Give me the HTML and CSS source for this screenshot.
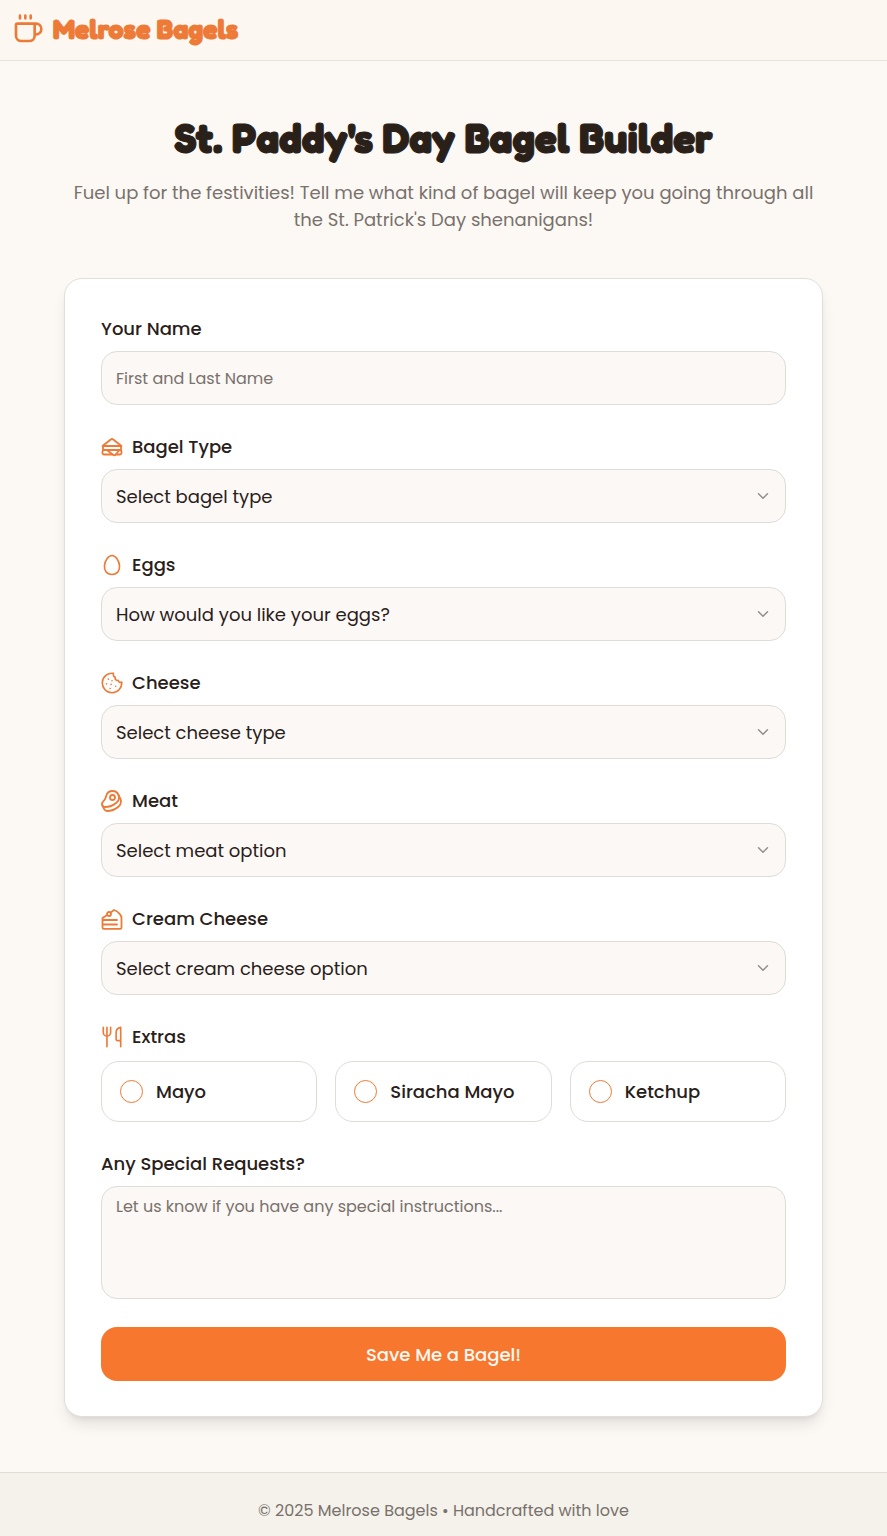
FILE: index.html
```
<!DOCTYPE html>
<html lang="en">
<head>
  <meta charset="UTF-8">
  <meta name="viewport" content="width=device-width, initial-scale=1.0">
  <title>St. Paddy's Day Bagel Builder - Melrose Bagels</title>
  <link rel="stylesheet" href="styles.css">
</head>
<body>

  <header>
    <a class="logo" href="#">
      <svg class="logo-icon" viewBox="0 0 24 24"><path d="M6 2v2M10 2v2M14 2v2M16 8a1 1 0 0 1 1 1v8a4 4 0 0 1-4 4H7a4 4 0 0 1-4-4V9a1 1 0 0 1 1-1h14a4 4 0 1 1 0 8h-1"/></svg>
      <span>Melrose Bagels</span>
    </a>
  </header>

  <main>
    <div class="intro">
      <h1>St. Paddy's Day Bagel Builder</h1>
      <p>Fuel up for the festivities! Tell me what kind of bagel will keep you going through all the St. Patrick's Day shenanigans!</p>
    </div>

    <form class="card">
      <div class="field">
        <label for="name">Your Name</label>
        <input type="text" id="name" placeholder="First and Last Name">
      </div>

      <div class="field">
        <label for="bagel">
          <svg class="icon" viewBox="1 1 22 22"><path d="M3 11v3a1 1 0 0 0 1 1h16a1 1 0 0 0 1-1v-3"/><path d="M12 19.500H4A1.500 1.500 0 0 1 2.500 18v-1.500A1.500 1.500 0 0 1 4 15h16a1.500 1.500 0 0 1 1.500 1.500V18a1.500 1.500 0 0 1-1.500 1.500h-4"/><path d="m2.500 11 8.270-6.540a2 2 0 0 1 2.460 0L21.500 11h-19Z"/><path d="M12.970 19.770 7 15h12.500l-3.750 4.500a2 2 0 0 1-2.780.27Z"/></svg>
          Bagel Type
        </label>
        <div class="select-wrap">
          <select id="bagel"><option>Select bagel type</option></select>
          <svg class="chevron" viewBox="0 0 24 24"><path d="m6 9 6 6 6-6"/></svg>
        </div>
      </div>

      <div class="field">
        <label for="eggs">
          <svg class="icon" viewBox="0 0 24 24"><path d="M12 22.400c6.200 0 8.600-4.700 8.200-9.700C19.800 7.300 16 1.600 12 1.600S4.200 7.300 3.800 12.700C3.400 17.700 5.800 22.400 12 22.400z"/></svg>
          Eggs
        </label>
        <div class="select-wrap">
          <select id="eggs"><option>How would you like your eggs?</option></select>
          <svg class="chevron" viewBox="0 0 24 24"><path d="m6 9 6 6 6-6"/></svg>
        </div>
      </div>

      <div class="field">
        <label for="cheese">
          <svg class="icon" viewBox="0 0 24 24"><path d="M13.500 1.500A10.600 10.600 0 1 0 22.600 11c-1.700.8-3.400 0-3.900-1.800-2.200.3-3.800-1.300-3.200-3.500-1.700-.7-2.400-2.400-2-4.200Z"/><path d="M8 7.800v.01M12 9.500v.01M6 13v.01M11 13.500v.01M10 18v.01M16 15.500v.01"/></svg>
          Cheese
        </label>
        <div class="select-wrap">
          <select id="cheese"><option>Select cheese type</option></select>
          <svg class="chevron" viewBox="0 0 24 24"><path d="m6 9 6 6 6-6"/></svg>
        </div>
      </div>

      <div class="field">
        <label for="meat">
          <svg class="icon" viewBox="1 1 22 22"><circle cx="12.5" cy="8.5" r="2.5"/><path d="M12.5 2a6.5 6.5 0 0 0-6.22 4.6c-1.1 3.13-.78 3.9-3.18 6.08A3 3 0 0 0 5 18c4 0 8.4-1.8 11.4-4.3A6.5 6.5 0 0 0 12.5 2Z"/><path d="m18.5 6 2.19 4.5a6.48 6.48 0 0 1 .31 2 6.49 6.49 0 0 1-2.6 5.2C15.4 20.2 11 22 7 22a3 3 0 0 1-2.68-1.66L2.4 16.5"/></svg>
          Meat
        </label>
        <div class="select-wrap">
          <select id="meat"><option>Select meat option</option></select>
          <svg class="chevron" viewBox="0 0 24 24"><path d="m6 9 6 6 6-6"/></svg>
        </div>
      </div>

      <div class="field">
        <label for="cream-cheese">
          <svg class="icon" viewBox="1 1 22 22"><circle cx="9" cy="7" r="2"/><path d="M7.2 7.9 2.5 11v9.500c0 .8.5 1.300 1.300 1.300h16.400c.8 0 1.300-.5 1.300-1.300V11c0-2.500-3-6.500-7.500-8l-3.400 2.600"/><path d="M17 13H3M17 17.500H3"/></svg>
          Cream Cheese
        </label>
        <div class="select-wrap">
          <select id="cream-cheese"><option>Select cream cheese option</option></select>
          <svg class="chevron" viewBox="0 0 24 24"><path d="m6 9 6 6 6-6"/></svg>
        </div>
      </div>

      <fieldset class="extras">
        <legend>
          <svg class="icon" viewBox="0 0 24 24"><path d="M2.500 1.500V7a4 4 0 0 0 8 0V1.500M6.500 1.500v21M21.500 16h-3.500a1.500 1.500 0 0 1-1.500-1.500V7c0-3 2-5 5-5.500v21"/></svg>
          Extras
        </legend>
        <div class="options">
          <label class="option"><input type="checkbox" name="extras" value="mayo">Mayo</label>
          <label class="option"><input type="checkbox" name="extras" value="siracha-mayo">Siracha Mayo</label>
          <label class="option"><input type="checkbox" name="extras" value="ketchup">Ketchup</label>
        </div>
      </fieldset>

      <div class="field">
        <label for="requests">Any Special Requests?</label>
        <textarea id="requests" placeholder="Let us know if you have any special instructions..."></textarea>
      </div>

      <button type="submit">Save Me a Bagel!</button>
    </form>
  </main>

  <footer>
    <p>© 2025 Melrose Bagels • Handcrafted with love</p>
  </footer>

</body>
</html>
```
FILE: styles.css
```
* {
  box-sizing: border-box;
}
body {
  margin: 0;
  min-height: 100vh;
  display: flex;
  flex-direction: column;
  font-family: Poppins, Inter, sans-serif;
  font-size: 18px;
  line-height: 27px;
  color: #292019;
  background-color: #fcf8f4;
}
svg {
  fill: none;
  stroke: currentColor;
  stroke-width: 2;
  stroke-linecap: round;
  stroke-linejoin: round;
  flex-shrink: 0;
}
header {
  padding: 13px 12px 15px;
  background-color: #fcf8f1;
  border-bottom: 1px solid #e6e2dd;
}
.logo {
  display: inline-flex;
  align-items: center;
  gap: 9px;
  height: 32px;
  vertical-align: top;
  color: #ed7a36;
  font-family: Fredoka, Inter, sans-serif;
  font-size: 27px;
  font-weight: 700;
  -webkit-text-stroke: 1px currentColor;
  text-decoration: none;
}
.logo-icon {
  width: 32px;
  height: 32px;
}
main {
  width: 100%;
  max-width: 1024px;
  margin: 0 auto;
  padding: 55px 64px;
}
.intro {
  margin-bottom: 45px;
  text-align: center;
}
h1 {
  margin: 0 0 18px;
  font-family: Fredoka, Inter, sans-serif;
  font-size: 41px;
  font-weight: 700;
  line-height: 45px;
  -webkit-text-stroke: 1px currentColor;
}
.intro p {
  margin: 0;
  color: #78716c;
}
.card {
  display: flex;
  flex-direction: column;
  gap: 28px;
  padding: 36px 36px 35px;
  background-color: #fff;
  border: 1px solid #e2deda;
  border-radius: 18px;
  box-shadow: 0 10px 15px -3px rgba(0, 0, 0, 0.1), 0 4px 6px -4px rgba(0, 0, 0, 0.1);
}
.field {
  display: flex;
  flex-direction: column;
  gap: 9px;
}
label, legend {
  display: flex;
  align-items: center;
  gap: 9px;
  padding: 0;
  font-weight: 500;
}
.icon {
  width: 22px;
  height: 22px;
  color: #ed7a36;
  stroke-width: 1.8;
}
input[type="text"], select, textarea {
  width: 100%;
  height: 54px;
  padding: 0 14px;
  font-family: inherit;
  font-size: 16px;
  color: #292019;
  background-color: #fcf8f5;
  border: 1px solid #dfdcd8;
  border-radius: 16px;
  outline: none;
}
select {
  appearance: none;
  display: block;
  font-size: 18px;
}
textarea {
  height: 113px;
  padding: 8px 14px;
  line-height: 24px;
  resize: none;
}
::placeholder {
  color: #78716c;
  opacity: 1;
}
.select-wrap {
  position: relative;
}
.chevron {
  position: absolute;
  top: 18px;
  right: 14px;
  width: 18px;
  height: 18px;
  color: #948f8a;
  pointer-events: none;
}
.extras {
  min-width: 0;
  margin: 0;
  padding: 0;
  border: none;
}
.options {
  display: grid;
  grid-template-columns: repeat(3, 1fr);
  gap: 18px;
  margin-top: 11px;
}
.option {
  gap: 13px;
  height: 61px;
  padding: 0 18px;
  border: 1px solid #dfdcd8;
  border-radius: 18px;
  cursor: pointer;
}
.option input {
  appearance: none;
  width: 23px;
  height: 23px;
  margin: 0;
  border: 1px solid #ed7a36;
  border-radius: 50%;
}
.option input:checked {
  background-color: #f6772d;
}
button {
  height: 54px;
  font-family: inherit;
  font-size: 18px;
  font-weight: 500;
  color: #fff8f2;
  background-color: #f6772d;
  border: none;
  border-radius: 16px;
  cursor: pointer;
}
button:hover {
  background-color: #e06820;
}
footer {
  flex-grow: 1;
  padding: 26px 14px 12px;
  text-align: center;
  font-size: 16px;
  line-height: 24px;
  color: #78716c;
  background-color: #f5f1eb;
  border-top: 1px solid #e2ded6;
}
footer p {
  margin: 0;
}
```
